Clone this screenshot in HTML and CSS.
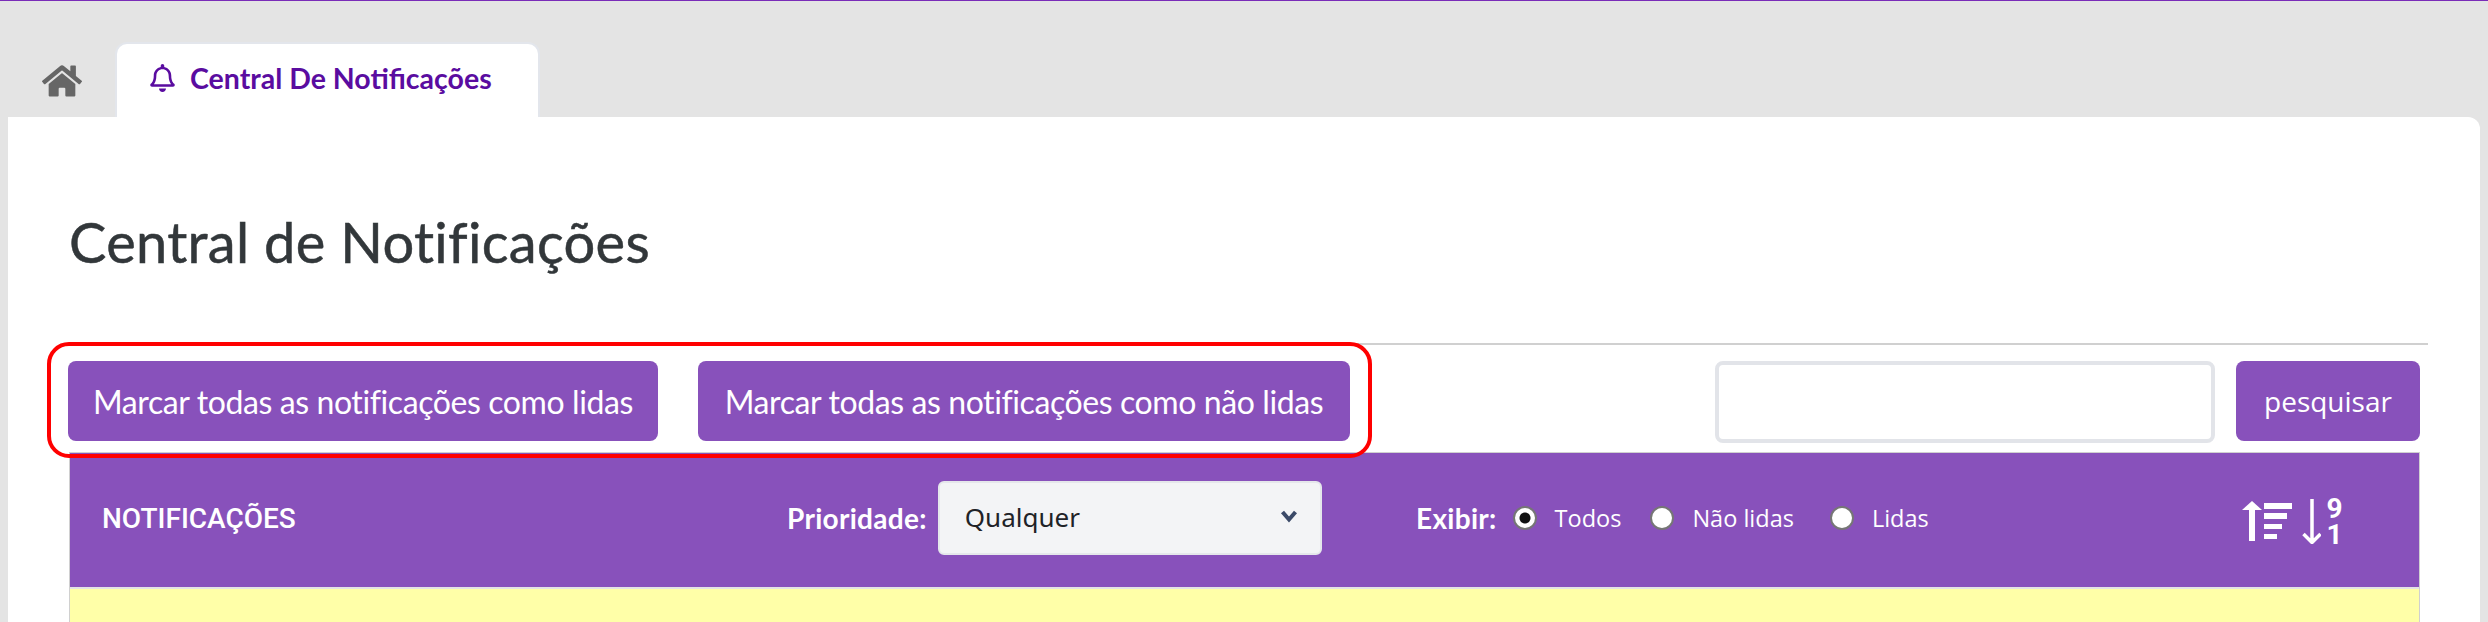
FILE: index.html
```html
<!DOCTYPE html>
<html lang="pt-BR">
<head>
    <meta charset="UTF-8">
    <meta name="viewport" content="width=device-width, initial-scale=1.0">
    <title>Central de Notificações</title>
    <link rel="stylesheet" href="styles.css">
</head>
<body>
    <nav class="tabs">
        <a class="tab-home" href="#">
            <svg class="icon-home" viewBox="0 0 576 512"><path d="M280.37 148.26L96 300.11V464a16 16 0 0 0 16 16l112.06-.29a16 16 0 0 0 15.92-16V368a16 16 0 0 1 16-16h64a16 16 0 0 1 16 16v95.64a16 16 0 0 0 16 16.05L464 480a16 16 0 0 0 16-16V300L295.67 148.26a12.19 12.19 0 0 0-15.3 0zM571.6 251.47L488 182.56V44.05a12 12 0 0 0-12-12h-56a12 12 0 0 0-12 12v72.61L318.47 43a48 48 0 0 0-61 0L4.34 251.47a12 12 0 0 0-1.6 16.9l25.5 31A12 12 0 0 0 45.15 301l235.22-193.74a12.19 12.19 0 0 1 15.3 0L530.9 301a12 12 0 0 0 16.9-1.6l25.5-31a12 12 0 0 0-1.7-16.93z"/></svg>
        </a>
        <a class="tab-active" href="#">
            <svg class="icon-bell" viewBox="0 0 448 512"><path d="M439.39 362.29c-19.32-20.76-55.47-51.99-55.47-154.29 0-77.7-54.48-139.9-127.94-155.16V32c0-17.67-14.32-32-31.98-32s-31.98 14.33-31.98 32v20.84C118.56 68.1 64.08 130.3 64.08 208c0 102.3-36.15 133.53-55.47 154.29-6 6.45-8.66 14.16-8.61 21.71.11 16.4 12.98 32 32.1 32h383.8c19.12 0 32-15.6 32.1-32 .05-7.55-2.61-15.27-8.61-21.71zM67.53 368c21.22-27.97 44.42-74.33 44.53-159.42 0-.2-.06-.38-.06-.58 0-61.86 50.14-112 112-112s112 50.14 112 112c0 .2-.06.38-.06.58.11 85.1 23.31 131.46 44.53 159.42H67.53zM224 512c35.32 0 63.97-28.65 63.97-64H160.03c0 35.35 28.65 64 63.97 64z"/></svg>
            <span>Central De Notificações</span>
        </a>
    </nav>

    <main class="card">
        <h1 class="page-title">Central de Notificações</h1>

        <div class="toolbar">
            <div class="highlight"></div>
            <button class="btn btn-mark-read">Marcar todas as notificações como lidas</button>
            <button class="btn btn-mark-unread">Marcar todas as notificações como não lidas</button>
            <form class="search">
                <input class="search-input" type="text">
                <button class="btn btn-search" type="button">pesquisar</button>
            </form>
        </div>

        <section class="panel">
            <header class="panel-head">
                <div class="panel-title">NOTIFICAÇÕES</div>
                <div class="filter-priority">
                    <label class="filter-label" for="prioridade">Prioridade:</label>
                    <div class="select-wrap">
                        <select id="prioridade" class="select">
                            <option>Qualquer</option>
                        </select>
                        <svg class="select-arrow" viewBox="0 0 18 14"><path d="M2.5 3l6.5 7.5L15.500 3" fill="none" stroke="#3b4a68" stroke-width="4"/></svg>
                    </div>
                </div>
                <div class="filter-show">
                    <span class="filter-label">Exibir:</span>
                    <label class="radio"><input type="radio" name="exibir" checked><span>Todos</span></label>
                    <label class="radio radio-unread"><input type="radio" name="exibir"><span>Não lidas</span></label>
                    <label class="radio"><input type="radio" name="exibir"><span>Lidas</span></label>
                </div>
                <div class="sort">
                    <svg class="sort-icon" viewBox="0 0 79 46">
                        <path d="M0 12L10 3l10 9z" fill="#fff"/>
                        <rect x="7" y="11" width="6" height="32" fill="#fff"/>
                        <rect x="22" y="5" width="28" height="6" fill="#fff"/>
                        <rect x="22" y="15" width="23" height="6" fill="#fff"/>
                        <rect x="22" y="26" width="18" height="5" fill="#fff"/>
                        <rect x="22" y="36" width="13" height="5" fill="#fff"/>
                        <path d="M70 1V44M61.500 36l8.500 8.500 8.500-8.500" fill="none" stroke="#fff" stroke-width="3.500"/>
                    </svg>
                    <div class="sort-digits">
                        <span>9</span>
                        <span>1</span>
                    </div>
                </div>
            </header>
            <div class="panel-row"></div>
        </section>
    </main>
</body>
</html>
```

FILE: styles.css
```css
* {
    box-sizing: border-box;
}

html, body {
    height: 100%;
}

body {
    margin: 0;
    background-color: #e4e4e4;
    border-top: 1px solid #7a2cb8;
    font-family: "Lato", sans-serif;
    display: flex;
    flex-direction: column;
    overflow: hidden;
}

.tabs {
    flex: none;
    display: flex;
    align-items: flex-end;
    height: 116px;
}

.tab-home {
    width: 115px;
    height: 75px;
    padding: 21px 0 0 42px;
}

.icon-home {
    display: block;
    width: 40px;
    height: 36px;
    fill: #666;
}

.tab-active {
    width: 425px;
    height: 75px;
    padding: 0 0 5px 33px;
    display: flex;
    align-items: center;
    gap: 15px;
    background: white;
    border: 2px solid #e3e6ec;
    border-bottom: none;
    border-radius: 12px 12px 0 0;
    color: #5a0ca0;
    text-decoration: none;
    font-size: 28.5px;
    font-weight: 700;
}

.icon-bell {
    width: 25px;
    height: 28px;
    fill: #5a0ca0;
}

.card {
    flex: 1;
    margin: 0 8px;
    padding: 0 52px 0 60px;
    background: white;
    border-radius: 0 12px 0 0;
}

.page-title {
    margin: 0;
    height: 226px;
    padding: 90px 0 0 1px;
    font-size: 56px;
    line-height: 70px;
    font-weight: 400;
    letter-spacing: 0.3px;
    -webkit-text-stroke: 0.5px #32373a;
    color: #32373a;
}

.toolbar {
    position: relative;
    display: flex;
    height: 109px;
    padding: 16px 8px 0 0;
    gap: 40px;
    border-top: 2px solid #d0d0d0;
}

.highlight {
    position: absolute;
    top: -3px;
    left: -21px;
    width: 1325px;
    height: 116px;
    border: 4px solid #f00;
    border-radius: 22px;
    z-index: 2;
}

.btn {
    height: 80px;
    padding: 0;
    border: none;
    border-radius: 8px;
    background-color: #8851bb;
    color: white;
    font-family: "Lato", sans-serif;
    font-size: 32px;
    letter-spacing: -0.4px;
    cursor: pointer;
}

.btn-mark-read {
    width: 590px;
}

.btn-mark-unread {
    width: 652px;
}

.search {
    margin-left: auto;
    display: flex;
    gap: 21px;
}

.search-input {
    width: 500px;
    height: 82px;
    border: 4px solid #e2e4e9;
    border-radius: 8px;
    background: white;
}

.btn-search {
    width: 184px;
    font-family: "Open Sans", sans-serif;
    font-size: 28px;
    letter-spacing: 0;
}

.panel {
    margin-left: 1px;
    width: 2351px;
    border: 1px solid #d0d0d0;
    border-width: 1px 1px 0 1px;
}

.panel-head {
    height: 136px;
    display: grid;
    grid-template-columns: 685px 629px 826px 106px;
    align-items: center;
    background-color: #8851bb;
    border-bottom: 2px solid #e4e4e4;
    color: white;
    padding: 0 0 4px 32px;
}

.panel-title {
    font-family: "Roboto", sans-serif;
    font-weight: 500;
    font-size: 28px;
}

.filter-priority,
.filter-show {
    display: flex;
    align-items: center;
}

.filter-label {
    font-size: 28px;
    font-weight: 700;
    letter-spacing: 0.3px;
}

.filter-priority .filter-label {
    margin-right: 11px;
}

.select-wrap {
    position: relative;
    width: 384px;
    height: 74px;
}

.select {
    width: 100%;
    height: 100%;
    padding: 0 0 2px 25px;
    appearance: none;
    background: #f3f4f6;
    border: 2px solid #e5e7eb;
    border-radius: 6px;
    font-family: "Noto Sans", sans-serif;
    font-size: 26px;
    color: #1f2328;
}

.select-arrow {
    position: absolute;
    top: 28px;
    right: 24px;
    width: 18px;
    height: 14px;
}

.filter-show .filter-label {
    margin-right: 16px;
}

.radio {
    display: flex;
    align-items: center;
    gap: 18px;
    margin-right: 29px;
    font-family: "Open Sans", sans-serif;
    font-size: 23.5px;
}

.radio-unread {
    margin-right: 36px;
}

.radio input {
    appearance: none;
    margin: 0;
    width: 24px;
    height: 24px;
    border: 2px solid #767676;
    border-radius: 50%;
    background: white;
}

.radio input:checked {
    background: radial-gradient(circle, #111 0 5px, white 6px);
}

.sort {
    display: flex;
    align-items: flex-start;
    margin-top: 10px;
}

.sort-icon {
    flex: none;
    width: 79px;
    height: 46px;
}

.sort-digits {
    width: 38px;
    margin-top: -2px;
    display: flex;
    flex-direction: column;
    align-items: center;
    font-family: "Roboto", sans-serif;
    font-weight: 700;
    font-size: 28px;
    line-height: 26px;
}

.panel-row {
    height: 33px;
    background-color: #ffffa8;
}
```
